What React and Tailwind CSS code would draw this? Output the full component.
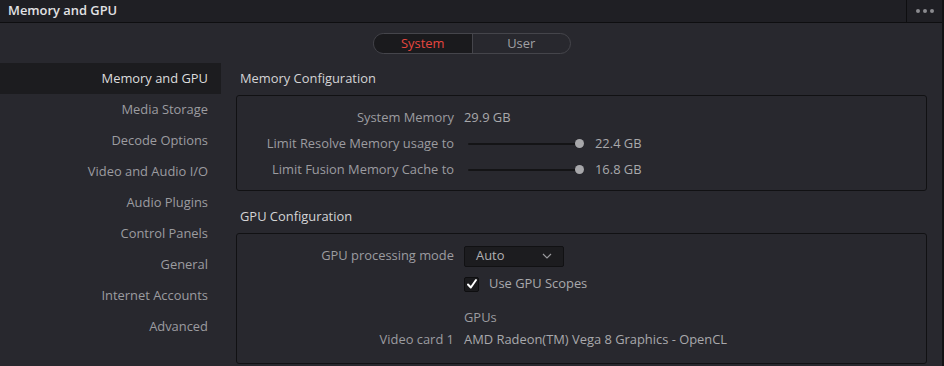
import React, { useState } from "react";

const navItems = [
  "Memory and GPU",
  "Media Storage",
  "Decode Options",
  "Video and Audio I/O",
  "Audio Plugins",
  "Control Panels",
  "General",
  "Internet Accounts",
  "Advanced",
];

const Slider = ({ value }) => (
  <div className="flex items-center">
    <div className="relative ml-[4px] w-[116px] h-[10px] flex items-center">
      <div className="w-full h-[2px] bg-[#141416] rounded" />
      <div className="absolute right-0 w-[9px] h-[9px] rounded-full bg-[#a7a7aa]" />
    </div>
    <span className="ml-[11px] text-[#a9a9ac]">{value}</span>
  </div>
);

const App = () => {
  const [tab, setTab] = useState("System");
  const [active, setActive] = useState("Memory and GPU");
  const [scopes, setScopes] = useState(true);

  return (
    <div
      className="w-[944px] h-[366px] bg-[#28282e] text-[12.9px] overflow-hidden flex flex-col border-r-2 border-[#121214]"
      style={{ fontFamily: '"Open Sans", "Noto Sans", sans-serif' }}
    >
      {/* header */}
      <div className="h-[23px] flex items-center bg-[#1f1f24] border-b border-[#0e0e10] shrink-0">
        <div className="flex-1 pl-[8px] font-semibold text-[#e2e2e4]">Memory and GPU</div>
        <div className="w-[36px] h-full border-l border-[#0e0e10] flex items-center justify-center gap-[3px]">
          <span className="w-[4px] h-[4px] rounded-full bg-[#8a8a8e]" />
          <span className="w-[4px] h-[4px] rounded-full bg-[#8a8a8e]" />
          <span className="w-[4px] h-[4px] rounded-full bg-[#8a8a8e]" />
        </div>
      </div>

      {/* tabs */}
      <div className="flex justify-center pt-[10px] pl-[2px]">
        <div className="flex h-[21px] w-[198px] rounded-full border border-[#45454b] overflow-hidden">
          {["System", "User"].map((t) => (
            <button
              key={t}
              onClick={() => setTab(t)}
              className={`flex-1 flex items-center justify-center ${
                tab === t ? "bg-[#1a1a1d] text-[#e5463f]" : "text-[#a0a0a4]"
              } ${t === "System" ? "border-r border-[#45454b]" : ""}`}
            >
              {t}
            </button>
          ))}
        </div>
      </div>

      <div className="flex mt-[9px]">
        {/* sidebar */}
        <div className="w-[221px] shrink-0 flex flex-col">
          {navItems.map((item) => (
            <div
              key={item}
              onClick={() => setActive(item)}
              className={`h-[31px] flex items-center justify-end pr-[13px] cursor-pointer ${
                active === item ? "bg-[#1c1c1f] text-[#dcdcde]" : "text-[#9c9ca0]"
              }`}
            >
              {item}
            </div>
          ))}
        </div>

        {/* content */}
        <div className="ml-[15px] w-[691px] flex flex-col">
          <div className="h-[32px] flex items-center pl-[4px] text-[#d4d4d6]">Memory Configuration</div>
          <div className="border border-[#111113] rounded-[3px] pt-[9px] pb-[7px] h-[96px]">
            <div className="grid grid-cols-[217px_1fr] gap-x-[10px] auto-rows-[26px] items-center">
              <div className="text-right text-[#9c9ca0]">System Memory</div>
              <div className="text-[#a9a9ac]">29.9 GB</div>
              <div className="text-right text-[#9c9ca0]">Limit Resolve Memory usage to</div>
              <Slider value="22.4 GB" />
              <div className="text-right text-[#9c9ca0]">Limit Fusion Memory Cache to</div>
              <Slider value="16.8 GB" />
            </div>
          </div>

          <div className="h-[42px] flex items-center pl-[4px] pt-[10px] text-[#d4d4d6]">GPU Configuration</div>
          <div className="border border-[#111113] rounded-[3px] pt-[11px] h-[131px]">
            <div className="grid grid-cols-[217px_1fr] gap-x-[10px] items-center">
              <div className="h-[22px] flex items-center justify-end text-[#9c9ca0]">GPU processing mode</div>
              <div className="h-[22px] flex items-center">
                <div className="w-[100px] h-[21px] rounded-[2px] border border-[#111113] bg-[#1c1c1f] flex items-center justify-between px-[11px] text-[#b0b0b3]">
                  <span>Auto</span>
                  <svg width="10" height="6" viewBox="0 0 10 6" fill="none">
                    <path d="M1 1 L5 5 L9 1" stroke="#9a9a9e" strokeWidth="1.2" />
                  </svg>
                </div>
              </div>
              <div className="h-[34px]" />
              <div className="h-[34px] flex items-center">
                <button
                  onClick={() => setScopes(!scopes)}
                  className="w-[15px] h-[15px] rounded-[2px] border border-[#0e0e10] bg-[#1a1a1d] flex items-center justify-center"
                >
                  {scopes && (
                    <svg width="12" height="12" viewBox="0 0 12 12" fill="none">
                      <path d="M2 6.5 L4.8 9.5 L10 2" stroke="#ffffff" strokeWidth="2" strokeLinecap="round" strokeLinejoin="round" />
                    </svg>
                  )}
                </button>
                <span className="ml-[10px] text-[#a9a9ac]">Use GPU Scopes</span>
              </div>
              <div className="h-[26px]" />
              <div className="h-[26px] flex items-end text-[#9c9ca0]">GPUs</div>
              <div className="h-[26px] flex items-center justify-end text-[#9c9ca0]">Video card 1</div>
              <div className="h-[26px] flex items-center text-[#a9a9ac]">AMD Radeon(TM) Vega 8 Graphics - OpenCL</div>
            </div>
          </div>
        </div>
      </div>
    </div>
  );
};

export default App;
